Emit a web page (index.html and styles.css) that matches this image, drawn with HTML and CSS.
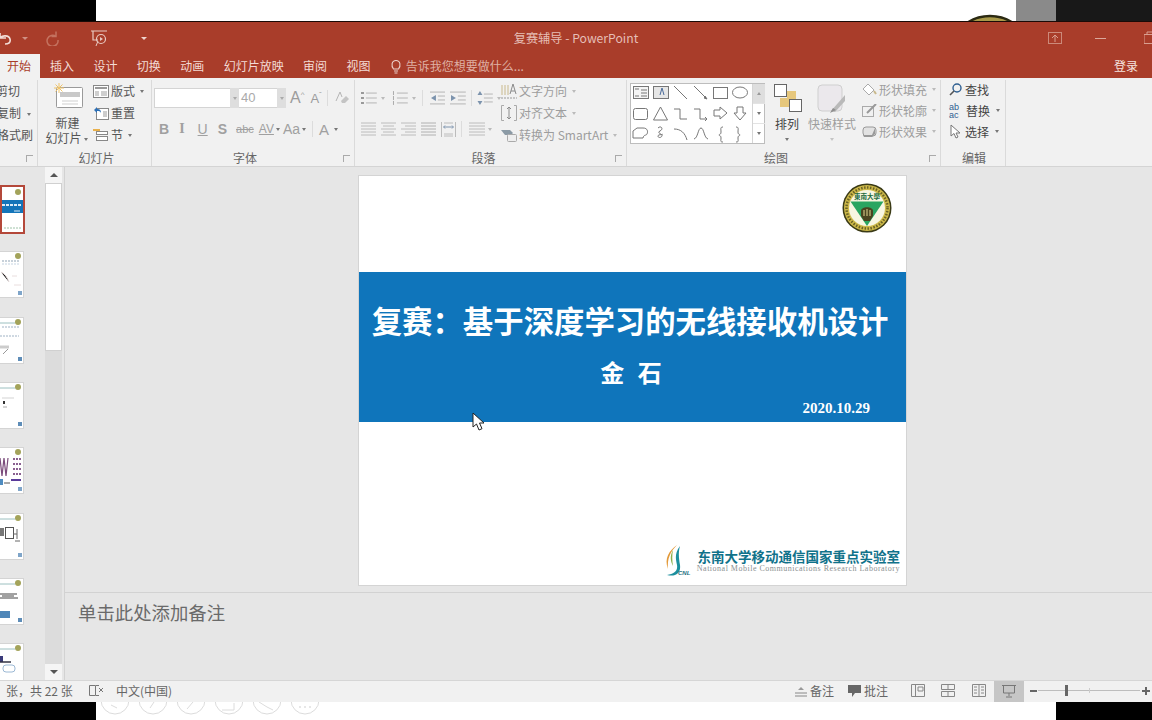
FILE: index.html
```html
<!DOCTYPE html>
<html lang="zh">
<head>
<meta charset="utf-8">
<title>复赛辅导 - PowerPoint</title>
<link rel="stylesheet" href="styles.css">
</head>
<body>
<div class="screen">
  <div class="strip-top">
    <div class="blk"></div>
    <div class="wht">
      <svg class="peek" width="60" height="7" viewBox="0 0 60 7"><circle cx="30" cy="43" r="41" fill="#a8994a" stroke="#2b2a12" stroke-width="2.500"/></svg>
    </div>
    <div class="gry"></div>
    <div class="drk"></div>
  </div>

  <div class="window">
    <div class="titlebar">
      <div class="qat">
        <svg class="q-undo" width="13" height="16" viewBox="0 0 13 16"><path d="M1 3v5h6M1 8c2-3 9-3 10 1s-2 5-5 5" fill="none" stroke="#f2dcd6" stroke-width="1.6"/></svg>
        <span class="mini-caret q-c1"></span>
        <svg class="q-redo" width="16" height="16" viewBox="0 0 16 16"><path d="M12 1.500v5H7.500M12 6.500A5.500 5.500 0 1 0 14 10" fill="none" stroke="#c4725f" stroke-width="1.500"/></svg>
        <svg class="q-show" width="18" height="18" viewBox="0 0 18 18"><path d="M1 2h16M3 2v9h5" fill="none" stroke="#e9cbc3" stroke-width="1.2"/><circle cx="11" cy="10" r="4.5" fill="none" stroke="#e9cbc3" stroke-width="1.2"/><path d="M10 8l3 2-3 2z" fill="#e9cbc3"/><path d="M6 17l2-5" stroke="#e9cbc3"/></svg>
        <span class="mini-caret q-c2"></span>
      </div>
      <div class="doc-title">复赛辅导 - PowerPoint</div>
      <div class="winctl">
        <svg class="w-share" width="14" height="12" viewBox="0 0 14 12"><rect x=".5" y=".5" width="13" height="11" fill="none" stroke="#cc8a7a"/><path d="M7 10V3M4 6l3-3 3 3" fill="none" stroke="#d99f90"/></svg>
        <span class="w-min"></span>
        <svg class="w-max" width="12" height="14" viewBox="0 0 12 14"><path d="M3 3V1h9M0 3.500h10v9H0z" fill="none" stroke="#d99f90"/></svg>
      </div>
    </div>

    <div class="tabs">
      <span class="tab active">开始</span>
      <span class="tab">插入</span>
      <span class="tab">设计</span>
      <span class="tab">切换</span>
      <span class="tab">动画</span>
      <span class="tab">幻灯片放映</span>
      <span class="tab">审阅</span>
      <span class="tab">视图</span>
      <span class="tell">
        <svg width="12" height="15" viewBox="0 0 12 15"><path d="M3.500 10C1 7 1.500 1.500 6 1.500S11 7 8.500 10zM4 12h4M4.500 14h3" fill="none" stroke="#ecd2cb" stroke-width="1.1"/></svg>
        告诉我您想要做什么...
      </span>
      <span class="login">登录</span>
    </div>

    <div class="ribbon">
      <section class="grp g-clip">
        <div class="clip-rows">
          <span class="clip-row">剪切</span>
          <span class="clip-row">复制<i class="caret"></i></span>
          <span class="clip-row last">格式刷</span>
        </div>
        <div class="grp-label"><i class="launcher"></i></div>
      </section>

      <section class="grp g-slides">
        <div class="slides-body">
          <div class="newslide">
            <svg width="30" height="26" viewBox="0 0 30 26"><rect x="2.500" y="4.500" width="26" height="20" rx="1" fill="#fff" stroke="#9a9a9a"/><rect x="6" y="9" width="20" height="5" fill="#c9c9c9"/><path d="M8 18h16M8 21h16" stroke="#cfcfcf"/><path d="M5 0v10M0 5h10M1.500 1.500l7 7M8.500 1.500l-7 7" stroke="#f0c46a"/></svg>
            <span class="nl1">新建</span>
            <span class="nl2">幻灯片<i class="caret"></i></span>
          </div>
          <div class="slide-cmds">
            <span class="cmd"><svg width="16" height="13" viewBox="0 0 16 13"><rect x=".5" y=".5" width="15" height="12" fill="#fff" stroke="#888"/><path d="M2 3h12" stroke="#999" stroke-width="2"/><path d="M2 6h4v5H2zM8 6h6v5H8z" fill="#cfcfcf"/></svg>版式<i class="caret"></i></span>
            <span class="cmd"><svg width="16" height="14" viewBox="0 0 16 14"><rect x="3.500" y="2.500" width="12" height="11" fill="#fff" stroke="#888"/><path d="M10 6h4M10 8h4M10 10h4" stroke="#999"/><path d="M1 4l3-3v2c3 0 4 1 4 4-1-2-2-2-4-2v2z" fill="#2c6fb5"/></svg>重置</span>
            <span class="cmd"><svg width="16" height="14" viewBox="0 0 16 14"><path d="M0 2h7" stroke="#e8b04c" stroke-width="2"/><rect x="3.500" y="3.500" width="11" height="3" fill="#fff" stroke="#888"/><rect x="3.500" y="8.500" width="11" height="4" fill="#fff" stroke="#888"/></svg>节<i class="caret"></i></span>
          </div>
        </div>
        <div class="grp-label">幻灯片</div>
      </section>

      <section class="grp g-font">
        <div class="font-body">
          <div class="font-top">
            <span class="fbox f-name"></span><span class="spin"><i class="caret"></i></span>
            <span class="fbox f-size">40</span><span class="spin"><i class="caret"></i></span>
            <span class="fa big">A<sup>^</sup></span>
            <span class="fa small">A<sup>ˇ</sup></span>
            <span class="vsep"></span>
            <svg class="eraser" width="14" height="14" viewBox="0 0 14 14"><path d="M1 10L5 1l2 5" fill="none" stroke="#b5b5b5"/><path d="M6 10l5-5 3 3-4 4H7z" fill="#c4c4c4"/></svg>
          </div>
          <div class="font-bot">
            <b class="fs s-b">B</b><i class="fs s-i">I</i><u class="fs s-u">U</u><b class="fs s-s">S</b>
            <span class="fs s-abc">abc</span><span class="fs s-av">AV</span><i class="caret c-av"></i>
            <span class="fs s-aa">Aa</span><i class="caret c-aa"></i><span class="vsep v-a"></span>
            <span class="fs s-a">A</span><i class="caret c-a"></i>
          </div>
        </div>
        <div class="grp-label">字体<i class="launcher"></i></div>
      </section>

      <section class="grp g-para">
        <div class="para-body">
          <div class="para-left">
            <div class="para-row r1">
              <svg class="lst" width="16" height="14" viewBox="0 0 16 14"><path d="M5 2h11M5 7h11M5 12h11" stroke="#b5b5b5"/><path d="M0 1h3v2H0zM0 6h3v2H0zM0 11h3v2H0z" fill="#999"/></svg><i class="caret c1"></i>
              <svg class="lst l2" width="16" height="14" viewBox="0 0 16 14"><path d="M5 2h11M5 7h11M5 12h11" stroke="#b5b5b5"/><path d="M1.500 0v4M1.500 5v4M1.500 10v4" stroke="#aaa"/></svg><i class="caret c1"></i>
              <span class="vsep vp1"></span>
              <svg class="lst l3" width="16" height="14" viewBox="0 0 16 14"><path d="M0 1h16M8 5h8M8 9h8M0 13h16" stroke="#b5b5b5"/><path d="M6 4v6L1 7z" fill="#7c93ad"/></svg>
              <svg class="lst l4" width="16" height="14" viewBox="0 0 16 14"><path d="M0 1h16M8 5h8M8 9h8M0 13h16" stroke="#b5b5b5"/><path d="M1 4v6l5-3z" fill="#7c93ad"/></svg>
              <span class="vsep vp2"></span>
              <svg class="lst l5" width="16" height="16" viewBox="0 0 16 16"><path d="M7 4h9M7 8h9M7 12h9" stroke="#b5b5b5"/><path d="M3 1L.5 5h5zM3 15L.5 11h5z" fill="#7c93ad"/></svg><i class="caret c1"></i>
            </div>
            <div class="para-row r2">
              <svg class="aln" width="15" height="14" viewBox="0 0 15 14"><path d="M0 1h15M0 4h15M0 7h15M0 10h15M0 13h15" stroke="#bcbcbc"/></svg>
              <svg class="aln" width="15" height="14" viewBox="0 0 15 14"><path d="M0 1h15M2 4h11M0 7h15M2 10h11M0 13h15" stroke="#bcbcbc"/></svg>
              <svg class="aln" width="15" height="14" viewBox="0 0 15 14"><path d="M0 1h15M4 4h11M0 7h15M4 10h11M0 13h15" stroke="#bcbcbc"/></svg>
              <svg class="aln" width="15" height="14" viewBox="0 0 15 14"><path d="M0 1h15M0 4h15M0 7h15M0 10h15M0 13h15" stroke="#b0b0b0"/></svg>
              <svg class="aln" width="15" height="15" viewBox="0 0 15 15"><path d="M.5 0v15M14.500 0v15M3 1h9M3 12h9M3 14h9" stroke="#bcbcbc"/><path d="M3 5h9M4 3.500L2.500 5 4 6.500M11 3.500L12.500 5 11 6.500" fill="none" stroke="#7c93ad"/></svg>
              <span class="vsep vp3"></span>
              <svg class="aln a6" width="16" height="14" viewBox="0 0 16 14"><path d="M0 1h16M0 4h16M0 7h16M0 10h16M0 13h16" stroke="#bcbcbc"/></svg><i class="caret c1"></i>
            </div>
          </div>
          <div class="para-cmds">
            <span class="cmd dim"><svg width="16" height="16" viewBox="0 0 16 16"><path d="M1 2v10M4 2v10M7 2v10" stroke="#c9b98c"/><path d="M0 15h16" stroke="#999" stroke-dasharray="2 1"/><path d="M9 11l3-10 3 10M10 8h4" fill="none" stroke="#8b8b8b"/></svg>文字方向<i class="caret"></i></span>
            <span class="cmd dim"><svg width="16" height="16" viewBox="0 0 16 16"><path d="M3 .5H.5v15H3M13 .5h2.500v15H13" fill="none" stroke="#aaa"/><path d="M8 2v12M6 4l2-2 2 2M6 12l2 2 2-2" fill="none" stroke="#8b8b8b"/></svg>对齐文本<i class="caret"></i></span>
            <span class="cmd dim"><svg width="16" height="14" viewBox="0 0 16 14"><path d="M0 2h9l3 3-2 2H8l-4 0z" fill="#8b9aa5"/><rect x="6.500" y="6.500" width="9" height="7" rx="1" fill="#eee" stroke="#aaa"/></svg>转换为 SmartArt<i class="caret"></i></span>
          </div>
        </div>
        <div class="grp-label">段落<i class="launcher"></i></div>
      </section>

      <section class="grp g-draw">
        <div class="draw-body">
          <div class="gallery">
            <svg class="shapes" width="122" height="61" viewBox="0 0 122 61" fill="none" stroke="#777">
              <rect x="3.500" y="3.500" width="15" height="12" fill="#f4f4f4"/><path d="M11 7h6M11 10h6M11 13h6M5 13h4M5 6h4" stroke="#777"/>
              <rect x="23.500" y="3.500" width="15" height="12" fill="#e6e6e6"/><path d="M30 12l2-7 2 7" stroke="#4a6b9a"/>
              <path d="M44 3l13 13"/><path d="M64 3l13 13"/><path d="M75 13l2 3-3-1" fill="#555"/>
              <rect x="83.500" y="4.500" width="14" height="11"/><ellipse cx="110" cy="9.500" rx="7.500" ry="5.500"/>
              <rect x="3.500" y="25.500" width="14" height="11" rx="2"/><path d="M30.500 24l7 13h-14z"/><path d="M44 26h6v10h7"/><path d="M64 26h6v10h7M75 34l2 2-2 2"/>
              <path d="M84 27h6v-3l7 6-7 6v-3h-6z"/><path d="M107 24h6v6h3l-6 7-6-7h3z"/>
              <path d="M3 55v-7l4-3h6c5 0 5 4 4 6s-3 0-4 4z"/><path d="M28 45c3-3 6 1 2 3s3 3 2 5-4 2-4 0 6-1 4-2"/>
              <path d="M44 46c7 0 11 4 13 11"/><path d="M64 56c4-1 4-11 7-11s3 10 7 11"/>
              <path d="M93 44c-3 0-2 2-2 5s-2 2-2 3 2 0 2 3-1 4 2 4"/><path d="M106 44c3 0 2 2 2 5s2 2 2 3-2 0-2 3 1 4-2 4"/>
            </svg>
            <div class="gal-scroll">
              <span class="gs dis"><i class="caret up"></i></span>
              <span class="gs"><i class="caret"></i></span>
              <span class="gs last"><i class="caret more"></i></span>
            </div>
          </div>
          <div class="arrange">
            <svg width="28" height="28" viewBox="0 0 28 28"><rect x="13" y="7" width="9" height="9" fill="#e6c77c"/><rect x="6" y="14" width="9" height="9" fill="#e6c77c"/><rect x=".5" y=".5" width="12" height="12" fill="#fff" stroke="#666"/><rect x="15.500" y="15.500" width="12" height="12" fill="#fff" stroke="#666"/></svg>
            <span class="btn-txt">排列</span>
            <i class="caret"></i>
          </div>
          <div class="quick">
            <svg width="30" height="30" viewBox="0 0 30 30"><rect x="1" y="1" width="24" height="26" rx="4" fill="#ebe8ec" stroke="#cfcfcf"/><path d="M14 27l14-16v6L18 28z" fill="#b9b9b9"/><path d="M13 29l3-5 3 2z" fill="#8f8f8f"/></svg>
            <span class="btn-txt dimmed">快速样式</span>
            <i class="caret lite"></i>
          </div>
          <div class="shape-cmds">
            <span class="cmd dim"><svg width="15" height="13" viewBox="0 0 15 13"><path d="M6 1l6 6-5 5-6-6z" fill="#fff" stroke="#aaa"/><path d="M12 8l2 3" stroke="#c9b98c" stroke-width="2"/></svg>形状填充<i class="caret"></i></span>
            <span class="cmd dim"><svg width="15" height="13" viewBox="0 0 15 13"><rect x=".5" y="2.500" width="11" height="10" fill="none" stroke="#aaa"/><path d="M5 9l9-9" stroke="#999" stroke-width="2"/></svg>形状轮廓<i class="caret"></i></span>
            <span class="cmd dim"><svg width="15" height="13" viewBox="0 0 15 13"><rect x="1" y="2" width="13" height="9" rx="3" fill="#e2e2e2" stroke="#999"/><path d="M1 10h9l3-7v6l-3 3H2z" fill="#999"/></svg>形状效果<i class="caret"></i></span>
          </div>
        </div>
        <div class="grp-label">绘图<i class="launcher"></i></div>
      </section>

      <section class="grp g-edit">
        <div class="edit-body">
          <span class="cmd"><svg width="13" height="13" viewBox="0 0 13 13"><circle cx="8" cy="5" r="4" fill="none" stroke="#2f5f91" stroke-width="1.400"/><path d="M5 8l-4 4" stroke="#555" stroke-width="1.600"/></svg>查找</span>
          <span class="cmd"><span class="abac">ab<br>ac</span>替换<i class="caret"></i></span>
          <span class="cmd"><svg width="13" height="15" viewBox="0 0 13 15"><path d="M2 1v11l3-2.500 2 4.500 2-1-2-4h4z" fill="#fff" stroke="#777"/></svg>选择<i class="caret"></i></span>
        </div>
        <div class="grp-label">编辑</div>
      </section>
    </div>

    <div class="main">
      <aside class="thumbs">
        <div class="thumb-list">
          <div class="thumb sel">
            <svg width="21" height="45" viewBox="0 0 21 45"><rect width="21" height="45" fill="#fff"/><circle cx="16" cy="5" r="3" fill="#a3a35a"/><rect y="13" width="21" height="13" fill="#1374b9"/><path d="M0 18h20" stroke="#dcecf7" stroke-width="2" stroke-dasharray="3 1"/><path d="M12 24h6" stroke="#dcecf7"/><path d="M2 41h17" stroke="#9ec2a8" stroke-dasharray="2 1"/></svg>
          </div>
          <div class="thumb t2">
            <svg width="23" height="45" viewBox="0 0 23 45"><circle cx="18" cy="4" r="3" fill="#a3a35a"/><path d="M2 9h18" stroke="#8fa3b5" stroke-dasharray="2 1"/><path d="M2 12h18" stroke="#c5d4e2" stroke-dasharray="2 1"/><path d="M1 20c4 2 6 5 8 10M12 24h5M14 33h7" stroke="#e9dede"/><rect x="18" y="39" width="4" height="4" fill="#7fa5c9"/></svg>
          </div>
          <div class="thumb t3">
            <svg width="23" height="45" viewBox="0 0 23 45"><circle cx="18" cy="4" r="3" fill="#a3a35a"/><path d="M0 5h15" stroke="#9cc0c0"/><path d="M2 9h18M0 18h19" stroke="#9fb2c4" stroke-dasharray="2 1"/><path d="M0 29h9" stroke="#ccc" stroke-width="3"/><path d="M3 36l5-5" stroke="#999"/><rect x="18" y="39" width="4" height="4" fill="#5e8db8"/></svg>
          </div>
          <div class="thumb t4">
            <svg width="23" height="45" viewBox="0 0 23 45"><circle cx="18" cy="4" r="3" fill="#a3a35a"/><path d="M0 5h15" stroke="#9cc0c0"/><path d="M2 15h12" stroke="#d3d3d3"/><rect x="3" y="18" width="2" height="3" fill="#333"/><path d="M3 24h4" stroke="#aaa"/><rect x="18" y="39" width="4" height="4" fill="#5e8db8"/></svg>
          </div>
          <div class="thumb t5">
            <svg width="23" height="45" viewBox="0 0 23 45"><circle cx="18" cy="4" r="3" fill="#a3a35a"/><path d="M0 10l2 18 2-18 2 18 2-18" fill="none" stroke="#7a4a7a" stroke-width="1.200"/><path d="M13 11h8M13 16h8M13 21h8M13 26h8" stroke="#8a6090" stroke-width="2" stroke-dasharray="2 1"/><path d="M11 32h10" stroke="#5a3a9a" stroke-width="2"/><rect y="31" width="3" height="6" fill="#4f8cc0"/><path d="M4 35h6" stroke="#555"/><rect x="18" y="39" width="4" height="4" fill="#7fa5c9"/></svg>
          </div>
          <div class="thumb t6">
            <svg width="23" height="45" viewBox="0 0 23 45"><circle cx="18" cy="4" r="3" fill="#a3a35a"/><path d="M0 5h15" stroke="#9cc0c0"/><rect x="5.500" y="13.500" width="8" height="11" fill="#fff" stroke="#555"/><rect y="14" width="4" height="8" fill="#777"/><path d="M13 20h4M17 15v10M15 27h5" stroke="#666"/><rect x="18" y="39" width="4" height="4" fill="#7fa5c9"/></svg>
          </div>
          <div class="thumb t7">
            <svg width="23" height="45" viewBox="0 0 23 45"><circle cx="18" cy="4" r="3" fill="#a3a35a"/><path d="M0 5h15" stroke="#9cc0c0"/><path d="M0 15h17M2 17h12M0 19h18" stroke="#444"/><rect y="32" width="10" height="7" fill="#4f86b8"/><rect x="18" y="39" width="4" height="4" fill="#5e8db8"/></svg>
          </div>
          <div class="thumb t8">
            <svg width="23" height="45" viewBox="0 0 23 45"><circle cx="18" cy="4" r="3" fill="#a3a35a"/><path d="M0 5h15" stroke="#9cc0c0"/><rect y="12" width="3" height="6" fill="#3a3a7a"/><path d="M0 18h11" stroke="#334" stroke-width="1.500"/><rect x="3" y="21" width="12" height="7" rx="3" fill="#fff" stroke="#9bb8d4"/></svg>
          </div>
        </div>
        <div class="scrollbar">
          <span class="sb-btn"><i class="caret up dark"></i></span>
          <span class="sb-thumb"></span>
          <span class="sb-track"></span>
          <span class="sb-btn"><i class="caret dark"></i></span>
        </div>
      </aside>

      <div class="editor">
        <div class="stage">
          <div class="slide">
            <div class="slide-top">
              <svg class="seal" width="50" height="50" viewBox="0 0 50 50">
                <circle cx="25" cy="25" r="24.500" fill="#3a3a16"/>
                <circle cx="25" cy="25" r="23" fill="#cdb949"/>
                <circle cx="25" cy="25" r="20.500" fill="none" stroke="#6b6226" stroke-dasharray="1.500 1.500" stroke-width="2.500"/>
                <circle cx="25" cy="25" r="18" fill="#f8f6e2"/>
                <path d="M8.500 18.500h33L25 43z" fill="#2aa561"/>
                <path d="M19 33v-5c0-5 12-5 12 0v5l-3 5h-6z" fill="#4a4420"/>
                <path d="M22 27v6M25 26v7M28 27v6" stroke="#e0d690"/>
                <text class="seal-txt" x="25" y="16">東南大學</text>
              </svg>
            </div>
            <div class="band">
              <h1 class="s-title">复赛：基于深度学习的无线接收机设计</h1>
              <p class="s-name">金 石</p>
              <p class="s-date">2020.10.29</p>
            </div>
            <div class="slide-bot">
              <svg class="swoosh" width="27" height="31" viewBox="0 0 27 31">
                <path d="M13 0C5 6 0 13 4 24 3 14 6 7 13 0z" fill="#e39a3a"/>
                <path d="M16 1C10 9 12 15 13 20c1 6-3 9-10 10 9 2 14-2 13-10-1-6-2-12 0-19z" fill="#1c8f9e"/>
                <path d="M9 5C6 10 6 16 9 21 8 15 8 10 9 5z" fill="#8bb04a"/>
                <text class="cnl" x="14" y="30">CNL</text>
              </svg>
              <div class="lab">
                <div class="lab-cn">东南大学移动通信国家重点实验室</div>
                <div class="lab-en">National Mobile Communications Research Laboratory</div>
              </div>
            </div>
          </div>
          <svg class="cursor" width="13" height="20" viewBox="0 0 13 20"><path d="M1 1v14l3.500-3 2.500 6 3-1.300L7.500 11H12z" fill="#fff" stroke="#222"/></svg>
        </div>
        <div class="notes">单击此处添加备注</div>
      </div>
    </div>

    <div class="status">
      <span class="st-count">张，共 22 张</span>
      <svg class="st-book" width="15" height="13" viewBox="0 0 15 13"><path d="M.5 1.500h6v10h-6zM7 1.500h3M7 11.500h3" fill="none" stroke="#777"/><path d="M10 4l4 4M14 4l-4 4" stroke="#777"/></svg>
      <span class="st-lang">中文(中国)</span>
      <span class="st-spacer"></span>
      <span class="st-item st-notes"><svg width="14" height="12" viewBox="0 0 14 12"><path d="M1 8h12M1 11h12" stroke="#888"/><path d="M4 5l3-3 3 3z" fill="#999"/></svg>备注</span>
      <span class="st-item st-comm"><svg width="14" height="12" viewBox="0 0 14 12"><path d="M0 0h13v8H7l-3 4V8H0z" fill="#666"/></svg>批注</span>
      <svg class="v v1" width="14" height="13" viewBox="0 0 14 13"><path d="M.5.500h13v12H.5zM4.500.500v12M7 3h5v4H7z" fill="none" stroke="#888"/></svg>
      <svg class="v v2" width="14" height="13" viewBox="0 0 14 13"><path d="M.5.500h13v5H.5zM.5 7.500h13v5H.5zM7 .5v5M7 7.500v5" fill="none" stroke="#888"/></svg>
      <svg class="v v3" width="14" height="13" viewBox="0 0 14 13"><path d="M.5.500h13v12H.5zM7 .5v12M2 3h3M2 6h3M2 9h3M9 3h3M9 6h3M9 9h3" fill="none" stroke="#888"/></svg>
      <span class="v-active"><svg width="14" height="13" viewBox="0 0 14 13"><path d="M0 .5h14M1.500 1v7h11V1M7 8v3M4 12h6" fill="none" stroke="#777"/></svg></span>
      <span class="zoom-minus"></span>
      <span class="zoom-track"><i class="zoom-thumb"></i><i class="zoom-mid"></i></span>
      <span class="zoom-plus"></span>
    </div>
  </div>

  <div class="strip-bot">
    <div class="blk"></div>
    <div class="wht">
      <svg class="tools" width="240" height="18" viewBox="0 0 240 18" fill="none" stroke="#dcdcdc">
        <circle cx="19" cy="-2" r="14"/><circle cx="57" cy="-2" r="14"/><circle cx="95" cy="-2" r="14"/><circle cx="133" cy="-2" r="14"/><circle cx="171" cy="-2" r="14"/><circle cx="209" cy="-2" r="14"/>
        <path d="M15 3l6 3M54 6l4-6M91 7l6-7M126 8h12V1M163 0l8 5 6 3"/>
        <path d="M203 5h2M208 5h2M213 5h2" stroke="#cfcfcf"/>
      </svg>
    </div>
    <div class="drk"></div>
  </div>
</div>
</body>
</html>
```

FILE: styles.css
```css
* { box-sizing: border-box; }
html, body { margin: 0; height: 100%; }
body { background: #000; overflow: hidden; font-family: "Noto Sans CJK SC", "Noto Sans", sans-serif; font-size: 12px; color: #555; }
i { font-style: normal; }
.screen { width: 1152px; height: 720px; display: flex; flex-direction: column; overflow: hidden; }

.strip-top { height: 21px; display: flex; flex: none; }
.strip-top .blk { width: 96px; background: #000; }
.strip-top .wht { flex: 1; background: #fff; display: flex; justify-content: flex-end; align-items: flex-end; padding-right: 0; }
.peek { display: block; margin-right: -4px; }
.strip-top .gry { width: 40px; background: #8a8a8a; }
.strip-top .drk { width: 96px; background: #181818; }

.window { flex: none; height: 681px; display: flex; flex-direction: column; background: #e6e6e6; }

.titlebar { height: 33px; flex: none; background: #a93d2a; border-top: 1px solid #1a0a06; display: grid; grid-template-columns: 1fr auto 1fr; align-items: center; }
.qat { display: flex; align-items: center; }
.q-undo { margin-left: -1px; }
.q-c1 { margin-left: 10px; opacity: .55; }
.q-redo { margin-left: 16px; }
.q-show { margin-left: 30px; }
.q-c2 { margin-left: 33px; }
.mini-caret { width: 0; height: 0; border: 3px solid transparent; border-top: 3px solid #f0d5ce; border-bottom-width: 0; }
.doc-title { color: #e6bfb6; font-size: 12.200px; line-height: 30px; }
.winctl { display: flex; align-items: center; justify-content: flex-end; margin-right: -4px; height: 100%; }
.w-share { margin-right: 33px; }
.w-min { width: 11px; height: 1px; background: #dba89b; margin-right: 38px; }

.tabs { height: 24px; flex: none; background: #a93d2a; display: flex; align-items: stretch; gap: 19.400px; color: #f3dbd5; line-height: 24px; }
.tab { display: block; }
.tab.active { width: 40px; background: #f1f1f1; color: #a93d2a; padding-left: 7px; margin-right: -9.400px; }
.tell { display: flex; align-items: center; gap: 4px; color: #dfb0a4; }
.login { margin-left: auto; margin-right: 14px; color: #f5e4df; }

.ribbon { height: 89px; flex: none; background: #f1f1f1; border-bottom: 1px solid #d4d4d4; display: flex; overflow: hidden; }
.grp { position: relative; flex: none; display: flex; flex-direction: column; border-right: 1px solid #dadada; margin-top: 2px; }
.grp-label { margin-top: auto; height: 16px; line-height: 16px; text-align: center; color: #666; font-size: 12px; position: relative; }
.launcher { position: absolute; right: 4px; bottom: 4px; width: 7px; height: 7px; border-left: 1px solid #aaa; border-top: 1px solid #aaa; }
.caret { display: inline-block; width: 0; height: 0; border: 2.500px solid transparent; border-top: 3px solid #777; border-bottom-width: 0; margin-left: 4px; vertical-align: middle; }
.caret.up { border-top-width: 0; border-bottom: 3px solid #999; }
.caret.dark { border-top-color: #555; }
.caret.up.dark { border-bottom-color: #555; }
.caret.more { box-shadow: 0 -3px 0 -2px #777; }
.cmd { display: flex; align-items: center; height: 22px; line-height: 22px; white-space: nowrap; color: #555; gap: 2px; }
.cmd .caret { margin-left: 3px; }
.cmd.dim { color: #9d9d9d; }
.cmd.dim .caret { border-top-color: #bbb; }

.g-clip { width: 38px; }
.clip-rows { display: flex; flex-direction: column; align-items: flex-end; }
.clip-row { height: 22px; line-height: 22px; white-space: nowrap; padding-right: 17px; margin-left: -20px; }
.clip-row:nth-child(2) { padding-right: 6px; }
.clip-row:nth-child(2) .caret { margin-left: 6px; }
.clip-row.last { padding-right: 4px; }

.g-slides { width: 114px; }
.g-slides .grp-label { padding-left: 4px; }
.slides-body { display: flex; }
.newslide { width: 51px; display: flex; flex-direction: column; align-items: center; padding-top: 3px; padding-left: 8px; line-height: 15px; color: #555; }
.newslide svg { margin-bottom: 6px; margin-left: 3px; }
.nl2 { white-space: nowrap; margin-left: -2px; }
.nl2 .caret { margin-left: 2px; }
.slide-cmds { margin-left: 4px; }

.g-font { width: 203px; padding-left: 2px; }
.g-font .grp-label { padding-right: 18px; }
.font-top { display: flex; align-items: center; height: 20px; margin-top: 8px; }
.fbox { height: 20px; background: #fff; border: 1px solid #d4d4d4; color: #aaa; font-size: 13px; line-height: 18px; padding-left: 2px; font-family: "Liberation Sans", sans-serif; }
.f-name { width: 76px; border-right: 0; }
.f-size { width: 38px; border-left: 0; border-right: 0; }
.spin { width: 9px; height: 20px; background: #dedede; display: flex; align-items: center; justify-content: center; }
.spin .caret { margin: 0; border-top-color: #aaa; }
.fa { font-family: "Liberation Sans", sans-serif; color: #9c9c9c; position: relative; }
.fa sup { font-size: 8px; vertical-align: 6px; line-height: 0; }
.big { font-size: 16px; margin-left: 4px; }
.small { font-size: 13px; margin-left: 6px; }
.vsep { width: 1px; height: 16px; background: #dcdcdc; display: block; flex: none; }
.font-top .vsep { margin-left: 5px; }
.eraser { margin-left: 7px; }
.font-bot { display: flex; align-items: center; height: 20px; margin-top: 11px; color: #a0a0a0; position: relative; font-family: "Liberation Sans", sans-serif; }
.fs { font-size: 14px; }
.s-b { margin-left: 5px; }
.s-i { margin-left: 10px; font-family: "Liberation Serif", serif; font-weight: bold; }
.s-u { margin-left: 13px; }
.s-s { margin-left: 10px; }
.s-abc { margin-left: 9px; font-size: 11px; text-decoration: line-through; }
.s-av { margin-left: 5px; font-size: 12px; text-decoration: underline; }
.c-av { margin-left: 2px; }
.s-aa { margin-left: 3px; font-size: 14px; }
.c-aa { margin-left: 2px; }
.v-a { margin-left: 6px; }
.s-a { margin-left: 6px; font-size: 15px; }
.c-a { margin-left: 5px; }

.g-para { width: 272px; }
.g-para .grp-label { padding-right: 14px; }
.para-body { display: flex; }
.para-left { width: 146px; padding-left: 6px; }
.para-row { display: flex; align-items: center; height: 20px; }
.para-row .caret { border-top-color: #bbb; }
.r1 { margin-top: 8px; }
.r2 { margin-top: 11px; gap: 5px; }
.l2 { margin-left: 7px; }
.vp1 { margin-left: 6px; }
.l3 { margin-left: 7px; }
.l4 { margin-left: 5px; }
.vp2 { margin-left: 5px; }
.l5 { margin-left: 5px; }
.r2 .a6 { margin-left: 2px; }
.r2 .caret { margin-left: -2px; }
.para-cmds { color: #9d9d9d; }

.g-draw { width: 314px; padding-left: 3px; }
.g-draw .grp-label { padding-right: 18px; }
.draw-body { display: flex; }
.gallery { width: 135px; height: 61px; margin-top: 3px; background: #fff; border: 1px solid #bdbdbd; display: flex; flex: none; }
.shapes { flex: none; margin: -1px 0 0 -1px; display: block; }
.gal-scroll { width: 13px; border-left: 1px solid #d5d5d5; display: flex; flex-direction: column; flex: none; }
.gs { flex: 1; display: flex; align-items: center; justify-content: center; border-bottom: 1px solid #e3e3e3; }
.gs.last { border-bottom: 0; }
.gs.dis { background: #dedede; }
.gs .caret { margin: 0; }
.arrange { width: 41px; display: flex; flex-direction: column; align-items: center; padding-top: 4px; flex: none; padding-left: 3px; color: #444; }
.arrange svg { margin-left: 2px; }
.btn-txt { line-height: 16px; margin-top: 4px; white-space: nowrap; }
.arrange .caret { margin: 6px 0 0 0; }
.quick { width: 52px; display: flex; flex-direction: column; align-items: center; padding-top: 4px; flex: none; }
.dimmed { color: #9d9d9d; margin-top: 2px; }
.caret.lite { margin: 6px 0 0 0; border-top-color: #c4c4c4; }
.shape-cmds { margin-left: 4px; margin-top: -1px; }
.shape-cmds .cmd { height: 21px; }

.g-edit { width: 65px; padding-left: 8px; }
.g-edit .grp-label { padding-right: 6px; }
.edit-body { margin-top: -1px; }
.edit-body .cmd { height: 21px; gap: 3px; color: #444; }
.abac { font-family: "Liberation Sans", sans-serif; font-size: 9px; line-height: 8px; color: #2f5f91; width: 14px; }

.main { flex: 1; min-height: 0; display: flex; }
.thumbs { width: 65px; flex: none; display: flex; border-right: 1px solid #d2d2d2; background: #e6e6e6; overflow: hidden; }
.thumb-list { width: 45px; flex: none; padding-top: 19px; display: flex; flex-direction: column; align-items: flex-start; gap: 20.330px; overflow: hidden; }
.thumb { width: 23px; height: 45px; flex: none; background: #fff; box-shadow: 0 0 0 1px #d4d4d4; }
.thumb svg { display: block; }
.thumb.sel { width: 25px; height: 49px; border: 2px solid #b4483a; margin-bottom: -2px; margin-top: -1px; box-shadow: none; }
.scrollbar { width: 17px; flex: none; background: #dcdcdc; display: flex; flex-direction: column; }
.sb-btn { height: 16px; flex: none; background: #f5f5f5; display: flex; align-items: center; justify-content: center; }
.sb-btn .caret { margin: 0; border-width: 4px; border-top-width: 4px; border-bottom-width: 0; }
.sb-btn .caret.up { border-top-width: 0; border-bottom-width: 4px; }
.sb-thumb { height: 168px; flex: none; background: #fff; border: 1px solid #d0d0d0; }
.sb-track { flex: 1; }

.editor { flex: 1; min-width: 0; display: flex; flex-direction: column; }
.stage { height: 426px; flex: none; display: flex; justify-content: flex-start; align-items: flex-start; padding: 8px 0 0 293px; position: relative; border-bottom: 1px solid #d2d2d2; }
.slide { width: 549px; height: 411px; background: #fff; border: 1px solid #d4d4d4; display: flex; flex-direction: column; }
.slide-top { height: 96px; flex: none; display: flex; justify-content: flex-end; padding: 7px 14px 0 0; }
.seal { display: block; }
.seal-txt { font-size: 6.500px; font-weight: 700; fill: #1c6b3e; text-anchor: middle; font-family: "Noto Sans CJK TC", sans-serif; }
.band { height: 150px; flex: none; background: #0f75bb; color: #fff; display: flex; flex-direction: column; align-items: center; }
.s-title { margin: 23px 0 0; padding-right: 5px; font-size: 30.400px; line-height: 50px; font-weight: 700; white-space: nowrap; }
.s-name { margin: 4px 0 0; padding-right: 3px; font-size: 24px; line-height: 46px; font-weight: 700; word-spacing: 8px; }
.s-date { margin: 5px 0 0; align-self: flex-end; padding-right: 36px; font: 700 15px/16px "Liberation Serif", serif; }
.slide-bot { flex: 1; display: flex; justify-content: flex-end; align-items: flex-end; padding: 0 6px 9px 0; gap: 5px; }
.swoosh { display: block; }
.cnl { font: italic 700 6px "Liberation Sans", sans-serif; fill: #1c6f7e; }
.lab { width: 204px; padding-bottom: 3px; }
.lab-cn { font-size: 13.500px; line-height: 16px; font-weight: 700; color: #10728a; white-space: nowrap; text-align: right; font-family: "Liberation Serif", "Noto Sans CJK SC", serif; }
.lab-en { margin-top: -2px; font: 8px/9px "Liberation Serif", serif; color: #8a8f90; white-space: nowrap; letter-spacing: .5px; text-align: right; }
.cursor { position: absolute; left: 407px; top: 245px; }
.notes { flex: 1; padding: 7px 0 0 13px; font-size: 18.400px; line-height: 24px; color: #6a6a6a; background: #e6e6e6; }

.status { height: 22px; flex: none; background: #f1f1f1; border-top: 1px solid #d6d6d6; display: flex; align-items: center; color: #666; white-space: nowrap; padding-bottom: 2px; }
.st-count { margin-left: 6px; font-size: 12px; width: 83px; }
.st-book { flex: none; }
.st-lang { margin-left: 12px; }
.st-spacer { flex: 1; }
.st-item { display: flex; align-items: center; gap: 2px; }
.st-notes { width: 54px; }
.st-comm { width: 63px; color: #666; }
.v { flex: none; }
.v2 { margin-left: 16px; }
.v3 { margin-left: 17px; }
.v-active { width: 30px; height: 21px; margin: 0 0 -2px 8px; background: #c6c6c6; display: flex; align-items: center; justify-content: center; }
.zoom-minus { width: 7px; height: 2px; background: #666; margin-left: 6px; flex: none; }
.zoom-track { width: 102px; height: 1px; background: #bdbdbd; margin-left: 1px; position: relative; flex: none; }
.zoom-thumb { position: absolute; left: 27px; top: -5px; width: 3px; height: 11px; background: #666; }
.zoom-mid { position: absolute; left: 51px; top: -2px; width: 1px; height: 5px; background: #ccc; }
.zoom-plus { width: 8px; height: 8px; margin: 0 2px; flex: none; background: linear-gradient(#666,#666) center/8px 2px no-repeat, linear-gradient(#666,#666) center/2px 8px no-repeat; }

.strip-bot { flex: 1; display: flex; min-height: 0; }
.strip-bot .blk { width: 96px; background: #000; }
.strip-bot .wht { flex: 1; background: #fff; overflow: hidden; }
.strip-bot .drk { width: 96px; background: #000; }
.tools { display: block; }
```
